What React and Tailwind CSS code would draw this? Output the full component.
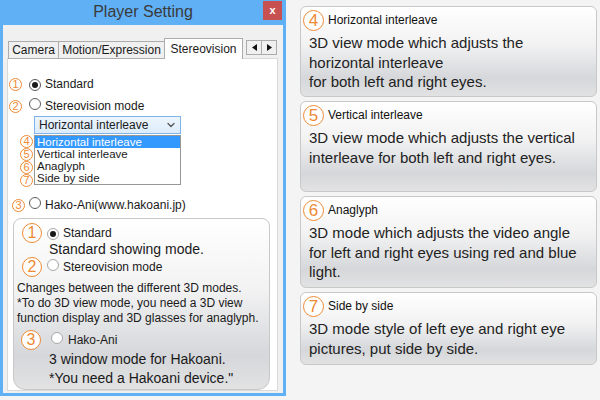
import React from "react";
import { ChevronDown } from "lucide-react";

const Num = ({ n, size = "sm" }) => {
  const cls =
    size === "lg"
      ? "w-[21px] h-[21px] text-[17px] border-[1.5px]"
      : size === "md"
      ? "w-[20px] h-[20px] text-[16px] border-[1.5px]"
      : "w-[13px] h-[13px] text-[11px] border";
  return (
    <span
      className={`inline-flex shrink-0 items-center justify-center rounded-full bg-white border-[#ee8a35] text-[#ee8a35] leading-none ${cls}`}
    >
      {n}
    </span>
  );
};

const Radio = ({ checked, light }) => (
  <span
    className={`inline-flex shrink-0 items-center justify-center w-[12px] h-[12px] rounded-full border bg-white ${
      light ? "border-[#a8a8a8]" : "border-[#5c5c5c]"
    }`}
  >
    {checked && <span className="w-[6px] h-[6px] rounded-full bg-[#1a1a1a]" />}
  </span>
);

const Arrow = ({ dir }) => (
  <span className="w-[16px] h-[15px] flex items-center justify-center bg-[#f0f0f0] border border-[#acacac]">
    <svg width="5" height="7" viewBox="0 0 5 7">
      {dir === "left" ? <path d="M5 0 L0 3.5 L5 7 Z" fill="#111" /> : <path d="M0 0 L5 3.5 L0 7 Z" fill="#111" />}
    </svg>
  </span>
);

const notes = [
  {
    n: "4",
    title: "Horizontal interleave",
    lines: ["3D view mode which adjusts the", "horizontal interleave", "for both left and right eyes."],
    h: "h-[91px]",
  },
  {
    n: "5",
    title: "Vertical interleave",
    lines: ["3D view mode which adjusts the vertical", "interleave for both left and right eyes."],
    h: "h-[91px]",
  },
  {
    n: "6",
    title: "Anaglyph",
    lines: ["3D mode which adjusts the video angle", "for left and right eyes using red and blue", "light."],
    h: "h-[92px]",
  },
  {
    n: "7",
    title: "Side by side",
    lines: ["3D mode style of left eye and right eye", "pictures, put side by side."],
    h: "h-[73px]",
  },
];

const gloss = "bg-[linear-gradient(180deg,#ffffff_0%,#f2f2f3_42%,#d5d7da_80%,#e2e2e3_100%)]";

export default function App() {
  return (
    <div className="w-[600px] h-[400px] bg-[#f4f4f4] flex items-start font-['Liberation_Sans',Arial,sans-serif] text-[#1a1a1a]">
      {/* Dialog window */}
      <div className="w-[286px] h-[396px] bg-[#60b0f6] flex flex-col px-[3px] pb-[3px]">
        <div className="h-[25px] flex items-start">
          <div className="w-[20px]" />
          <div className="flex-1 text-center text-[16px] leading-[24px] text-[#3a3a3a]">Player Setting</div>
          <div className="mt-[1px] mr-[1px] w-[19px] h-[19px] bg-[#c75050] flex items-center justify-center text-white text-[11px] font-bold leading-none">
            x
          </div>
        </div>

        <div className="flex-1 bg-[#f0f0f0] pt-[11px] pl-[4px] pr-[5px] pb-[2px] flex flex-col">
          {/* Tabs */}
          <div className="h-[22px] flex items-end text-[12px] relative z-10">
            <div className="ml-[1px] w-[51px] h-[18px] -mb-px border border-[#acacac] bg-[#f0f0f0] flex items-center justify-center leading-none">
              Camera
            </div>
            <div className="w-[107px] h-[18px] -mb-px -ml-px border border-[#acacac] bg-[#f0f0f0] flex items-center justify-center leading-none">
              Motion/Expression
            </div>
            <div className="w-[79px] h-[21px] -mb-px -ml-px border border-b-0 border-[#acacac] bg-white flex items-center justify-center leading-none">
              Stereovision
            </div>
            <div className="ml-[3px] mb-[3px] flex">
              <Arrow dir="left" />
              <div className="-ml-px">
                <Arrow dir="right" />
              </div>
            </div>
          </div>

          {/* Panel */}
          <div className="flex-1 bg-white border border-[#d9d9d9] w-[271px] flex flex-col text-[12px] pt-[18px]">
            <div className="h-[14px] flex items-center ml-[1px]">
              <Num n="1" />
              <span className="ml-[7px]">
                <Radio checked />
              </span>
              <span className="ml-[4px]">Standard</span>
            </div>
            <div className="h-[14px] mt-[8px] flex items-center ml-[1px]">
              <Num n="2" />
              <span className="ml-[7px]">
                <Radio />
              </span>
              <span className="ml-[4px]">Stereovision mode</span>
            </div>

            <div className="ml-[26px] mt-[3px] w-[147px] h-[18px] border border-[#7eb4ea] bg-[linear-gradient(180deg,#edf5fd,#dcecfc)] flex items-center justify-between pl-[4px] pr-[3px]">
              <span className="leading-none">Horizontal interleave</span>
              <ChevronDown size={12} strokeWidth={2.5} color="#555" />
            </div>

            <div className="flex mt-[1px]">
              <div className="ml-[12px] flex flex-col">
                {["4", "5", "6", "7"].map((n) => (
                  <Num key={n} n={n} />
                ))}
              </div>
              <div className="ml-px w-[147px] h-[50px] border border-[#979797] bg-white flex flex-col text-[11.5px]">
                <div className="h-[12px] leading-[12px] bg-[#3399ff] text-white pl-[2px]">Horizontal interleave</div>
                <div className="h-[12px] leading-[12px] pl-[2px]">Vertical interleave</div>
                <div className="h-[12px] leading-[12px] pl-[2px]">Anaglyph</div>
                <div className="h-[12px] leading-[12px] pl-[2px]">Side by side</div>
              </div>
            </div>

            <div className="h-[14px] mt-[11px] flex items-center ml-[4px]">
              <Num n="3" />
              <span className="ml-[4px]">
                <Radio />
              </span>
              <span className="ml-[4px]">Hako-Ani(www.hakoani.jp)</span>
            </div>

            {/* Callout */}
            <div className={`ml-[5px] mt-[6px] w-[257px] h-[172px] rounded-[8px] rounded-b-[12px] border border-[#c8c8c8] ${gloss} flex flex-col pt-[4px]`}>
              <div className="h-[20px] flex items-center ml-[8px]">
                <Num n="1" size="md" />
                <span className="ml-[5px]">
                  <Radio checked light />
                </span>
                <span className="ml-[4px]">Standard</span>
              </div>
              <div className="ml-[35px] text-[14px] leading-[16px] -mt-[2px]">Standard showing mode.</div>
              <div className="h-[20px] flex items-center ml-[8px]">
                <Num n="2" size="md" />
                <span className="ml-[5px]">
                  <Radio light />
                </span>
                <span className="ml-[4px]">Stereovision mode</span>
              </div>
              <div className="ml-[3px] mt-[4px] text-[12px] leading-[15px]">
                <div>Changes between the different 3D modes.</div>
                <div>*To do 3D view mode, you need a 3D view</div>
                <div>function display and 3D glasses for anaglyph.</div>
              </div>
              <div className="h-[20px] mt-[4px] flex items-center ml-[7px]">
                <Num n="3" size="md" />
                <span className="ml-[10px]">
                  <Radio light />
                </span>
                <span className="ml-[5px]">Hako-Ani</span>
              </div>
              <div className="ml-[35px] text-[14px] leading-[19px]">
                <div>3 window mode for Hakoani.</div>
                <div>*You need a Hakoani device."</div>
              </div>
            </div>
          </div>
        </div>
      </div>

      {/* Notes */}
      <div className="ml-[14px] mt-[6px] w-[297px] flex flex-col gap-[4px]">
        {notes.map((note) => (
          <div key={note.n} className={`${note.h} rounded-[6px] border border-[#c8c8c8] ${gloss} pt-[2px] pl-[2px]`}>
            <div className="h-[22px] flex items-center">
              <Num n={note.n} size="lg" />
              <span className="ml-[4px] text-[12px] text-[#111]">{note.title}</span>
            </div>
            <div className="ml-[6px] mt-[2px] text-[15px] leading-[19.5px] text-[#222]">
              {note.lines.map((l) => (
                <div key={l}>{l}</div>
              ))}
            </div>
          </div>
        ))}
      </div>
    </div>
  );
}
